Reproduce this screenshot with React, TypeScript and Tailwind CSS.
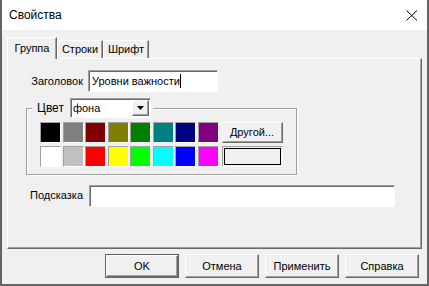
import React from 'react'

const raised =
  'border border-t-white border-l-white border-r-[#696969] border-b-[#696969] shadow-[inset_-1px_-1px_0_#a0a0a0]'
const sunken =
  'border border-t-[#a0a0a0] border-l-[#a0a0a0] border-r-white border-b-white shadow-[inset_1px_1px_0_#696969]'

const topRow = ['bg-[#000000]', 'bg-[#808080]', 'bg-[#800000]', 'bg-[#808000]', 'bg-[#008000]', 'bg-[#008080]', 'bg-[#000080]', 'bg-[#800080]']
const bottomRow = ['bg-[#ffffff]', 'bg-[#c0c0c0]', 'bg-[#ff0000]', 'bg-[#ffff00]', 'bg-[#00ff00]', 'bg-[#00ffff]', 'bg-[#0000ff]', 'bg-[#ff00ff]']

const Swatch: React.FC<{ color: string }> = ({ color }) => (
  <div className={`h-[21px] w-[21px] border border-t-[#a0a0a0] border-l-[#a0a0a0] border-r-white border-b-white ${color}`} />
)

export default function App() {
  return (
    <div className="w-[429px] h-[286px] flex flex-col bg-[#f0f0f0] border-x-2 border-b-2 border-[#646464] font-['Liberation_Sans',Arial,sans-serif] text-[11px] text-black overflow-hidden">
      {/* title bar */}
      <div className="h-[30px] shrink-0 bg-white flex items-center justify-between pl-[7px] pr-[9px]">
        <span className="text-[12px]">Свойства</span>
        <svg width="12" height="11" viewBox="0 0 12 11" className="shrink-0">
          <path d="M0.5 0.5 L11 10.5 M11 0.5 L0.5 10.5" stroke="#000" strokeWidth="1" fill="none" />
        </svg>
      </div>

      {/* tabs */}
      <div className="mt-[7px] ml-[5px] flex items-end h-[21px]">
        <div className="relative z-10 -mb-px h-[22px] w-[50px] flex items-center justify-center pb-[1px] bg-[#f0f0f0] border border-b-0 border-t-white border-l-white border-r-[#696969] shadow-[inset_-1px_0_0_#a0a0a0]">
          Группа
        </div>
        <div className="h-[18px] w-[46px] flex items-center justify-center border border-b-0 border-t-white border-l-white border-r-[#696969] shadow-[inset_-1px_0_0_#a0a0a0]">
          Строки
        </div>
        <div className="h-[18px] w-[46px] flex items-center justify-center border border-b-0 border-t-white border-l-white border-r-[#696969] shadow-[inset_-1px_0_0_#a0a0a0]">
          Шрифт
        </div>
      </div>

      {/* tab panel */}
      <div className={`mx-[5px] h-[191px] shrink-0 flex flex-col ${raised}`}>
        <div className="mt-[11px] flex items-center">
          <span className="w-[75px] text-right">Заголовок</span>
          <div className={`ml-[5px] w-[130px] h-[22px] bg-white flex items-center pl-[3px] ${sunken}`}>
            <span>Уровни важности</span>
            <span className="inline-block w-px h-[14px] bg-black" />
          </div>
        </div>

        <fieldset className="mt-[6px] ml-[18px] w-[270px] border border-[#a0a0a0] shadow-[inset_1px_1px_0_#fff,1px_1px_0_#fff] pr-[13px] pb-[7px]">
          <legend className="ml-[5px] pl-[5px] pr-[2px] bg-[#f0f0f0]">
            <div className="flex items-center gap-[6px]">
              <span className="text-[12px]">Цвет</span>
              <div className={`w-[81px] h-[20px] bg-white flex items-center justify-between pl-[2px] pr-px ${sunken}`}>
                <span>фона</span>
                <div className={`w-[17px] h-[16px] bg-[#f0f0f0] flex items-center justify-center ${raised}`}>
                  <svg width="7" height="4" viewBox="0 0 7 4">
                    <path d="M0 0 H7 L3.5 4 Z" fill="#000" />
                  </svg>
                </div>
              </div>
            </div>
          </legend>

          <div className="mt-[4px] ml-[13px] flex">
            <div className="grid grid-cols-[repeat(8,21px)] gap-x-[1.5px] gap-y-[2.5px]">
              {topRow.map((c) => (
                <Swatch key={c} color={c} />
              ))}
              {bottomRow.map((c) => (
                <Swatch key={c} color={c} />
              ))}
            </div>
            <div className="ml-[3px] w-[61px] flex flex-col gap-[2.5px]">
              <div className={`h-[21px] flex items-center justify-center ${raised}`}>Другой...</div>
              <div className="h-[21px] border border-t-[#a0a0a0] border-l-[#a0a0a0] border-r-white border-b-white p-px">
                <div className="h-full border border-black bg-[#f0f0f0]" />
              </div>
            </div>
          </div>
        </fieldset>

        <div className="mt-[10px] flex items-center">
          <span className="w-[75px] text-right">Подсказка</span>
          <div className={`ml-[6px] w-[306px] h-[22px] bg-white ${sunken}`} />
        </div>
      </div>

      {/* buttons */}
      <div className="mt-[5px] flex justify-end gap-[6px] pr-[8px]">
        <div className="w-[74px] h-[24px] border border-[#646464]">
          <div className={`h-full flex items-center justify-center ${raised}`}>OK</div>
        </div>
        <div className={`w-[74px] h-[24px] flex items-center justify-center ${raised}`}>Отмена</div>
        <div className={`w-[74px] h-[24px] flex items-center justify-center ${raised}`}>Применить</div>
        <div className={`w-[74px] h-[24px] flex items-center justify-center ${raised}`}>Справка</div>
      </div>
    </div>
  )
}
